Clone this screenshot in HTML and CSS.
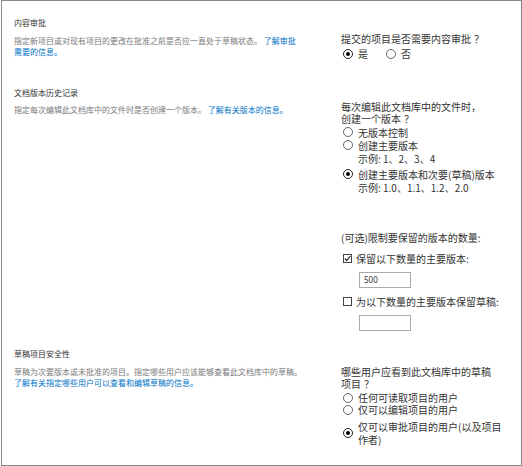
FILE: index.html
```html
<!DOCTYPE html>
<html lang="zh-CN">
<head>
<meta charset="utf-8">
<title>版本控制设置</title>
<link rel="stylesheet" href="styles.css">
</head>
<body>
<div class="frame">
  <section class="sec sec1">
    <div class="info">
      <div class="title">内容审批</div>
      <div class="desc">指定新项目或对现有项目的更改在批准之前是否应一直处于草稿状态。 <a href="#">了解审批<br>需要的信息。</a></div>
    </div>
    <div class="ctl ctl1">
      <div class="q">提交的项目是否需要内容审批<span class="qm">？</span></div>
      <div class="inline-opts">
        <div class="opt"><span class="radio on"></span><span>是</span></div>
        <div class="opt"><span class="radio"></span><span>否</span></div>
      </div>
    </div>
  </section>

  <section class="sec sec2">
    <div class="info">
      <div class="title">文档版本历史记录</div>
      <div class="desc">指定每次编辑此文档库中的文件时是否创建一个版本。 <a href="#">了解有关版本的信息。</a></div>
    </div>
    <div class="ctl ctl2">
      <div class="q">每次编辑此文档库中的文件时，<br>创建一个版本<span class="qm">？</span></div>
      <div class="vopts">
        <div class="item">
          <div class="opt"><span class="radio"></span><span>无版本控制</span></div>
        </div>
        <div class="item">
          <div class="opt"><span class="radio"></span><span>创建主要版本</span></div>
          <div class="example">示例: 1、2、3、4</div>
        </div>
        <div class="item item3">
          <div class="opt"><span class="radio on"></span><span>创建主要版本和次要(草稿)版本</span></div>
          <div class="example">示例: 1.0、1.1、1.2、2.0</div>
        </div>
      </div>
      <div class="limit">(可选)限制要保留的版本的数量:</div>
      <div class="chk-row">
        <span class="chk on"><svg viewBox="0 0 9 9" width="9" height="9"><path d="M1.8 4.6 L3.7 6.5 L7.3 2" fill="none" stroke="#222" stroke-width="1.2"/></svg></span>
        <span>保留以下数量的主要版本:</span>
      </div>
      <div class="num">500</div>
      <div class="chk-row">
        <span class="chk"></span>
        <span>为以下数量的主要版本保留草稿:</span>
      </div>
      <div class="num"></div>
    </div>
  </section>

  <section class="sec sec3">
    <div class="info">
      <div class="title">草稿项目安全性</div>
      <div class="desc">草稿为次要版本或未批准的项目。指定哪些用户应该能够查看此文档库中的草稿。<br><a href="#">了解有关指定哪些用户可以查看和编辑草稿的信息。</a></div>
    </div>
    <div class="ctl ctl3">
      <div class="q">哪些用户应看到此文档库中的草稿<br>项目<span class="qm">？</span></div>
      <div class="sopts">
        <div class="opt s1"><span class="radio"></span><span>任何可读取项目的用户</span></div>
        <div class="opt s2"><span class="radio"></span><span>仅可以编辑项目的用户</span></div>
        <div class="opt s3"><span class="radio on"></span><span>仅可以审批项目的用户(以及项目<br>作者)</span></div>
      </div>
    </div>
  </section>
</div>
</body>
</html>
```

FILE: styles.css
```css
* { box-sizing: border-box; }
html, body { margin: 0; padding: 0; background: #fff; }
body {
  font-family: "Noto Sans CJK SC", "Noto Sans", sans-serif;
  color: #444;
}
.frame {
  margin-left: 1px;
  width: 521px;
  height: 466px;
  border: 1px solid #8a8a8a;
  padding: 16px 0 0 12px;
  overflow: hidden;
}
.sec {
  display: grid;
  grid-template-columns: 327px 1fr;
  align-items: start;
}
.sec2 { margin-top: 26.5px; }
.sec3 { margin-top: 17px; }

.title {
  font-size: 8px;
  line-height: 12px;
  color: #333;
}
.desc {
  font-size: 8px;
  line-height: 11px;
  color: #7a7a7a;
  margin-top: 5.5px;
  white-space: nowrap;
}
.desc a { color: #0072c6; text-decoration: none; }

.ctl { font-size: 10px; color: #333; }
.ctl1 { padding-top: 16px; }
.ctl2 { padding-top: 14.2px; }
.ctl3 { padding-top: 17.5px; }
.q { line-height: 12px; }
.qm { padding-left: 3px; }

.opt {
  display: flex;
  align-items: center;
  gap: 5px;
  padding-left: 2px;
  line-height: 13px;
}
.inline-opts {
  display: flex;
  gap: 16px;
  margin-top: 2px;
}

.radio {
  flex: none;
  width: 10px;
  height: 10px;
  border: 1px solid #666;
  border-radius: 50%;
  background: #fff;
  display: flex;
  align-items: center;
  justify-content: center;
}
.radio.on { border-color: #222; }
.radio.on::after {
  content: "";
  width: 4px;
  height: 4px;
  border-radius: 50%;
  background: #000;
}

.vopts { margin-top: 1.3px; }
.item3 { margin-top: 2.7px; }
.example { padding-left: 17px; line-height: 13px; }

.limit { margin-top: 38.6px; line-height: 12px; }
.chk-row {
  display: flex;
  align-items: center;
  gap: 4px;
  padding-left: 2px;
  line-height: 13px;
  margin-top: 7.3px;
}
.chk-row:first-of-type { margin-top: 7.5px; }
.chk {
  flex: none;
  width: 9px;
  height: 9px;
  border: 1px solid #444;
  background: #fff;
  position: relative;
}
.chk svg { position: absolute; left: -1px; top: -1px; }
.num {
  margin: 7.2px 0 0 18px;
  width: 52px;
  height: 16px;
  border: 1px solid #ababab;
  font-family: "Noto Sans", sans-serif;
  font-size: 8px;
  line-height: 14px;
  padding-left: 4px;
  color: #333;
}

.sopts .s1 { margin-top: 2.7px; line-height: 12px; }
.sopts .s2 { line-height: 12px; }
.sopts .s3 { margin-top: 3.5px; line-height: 13.3px; }
```
